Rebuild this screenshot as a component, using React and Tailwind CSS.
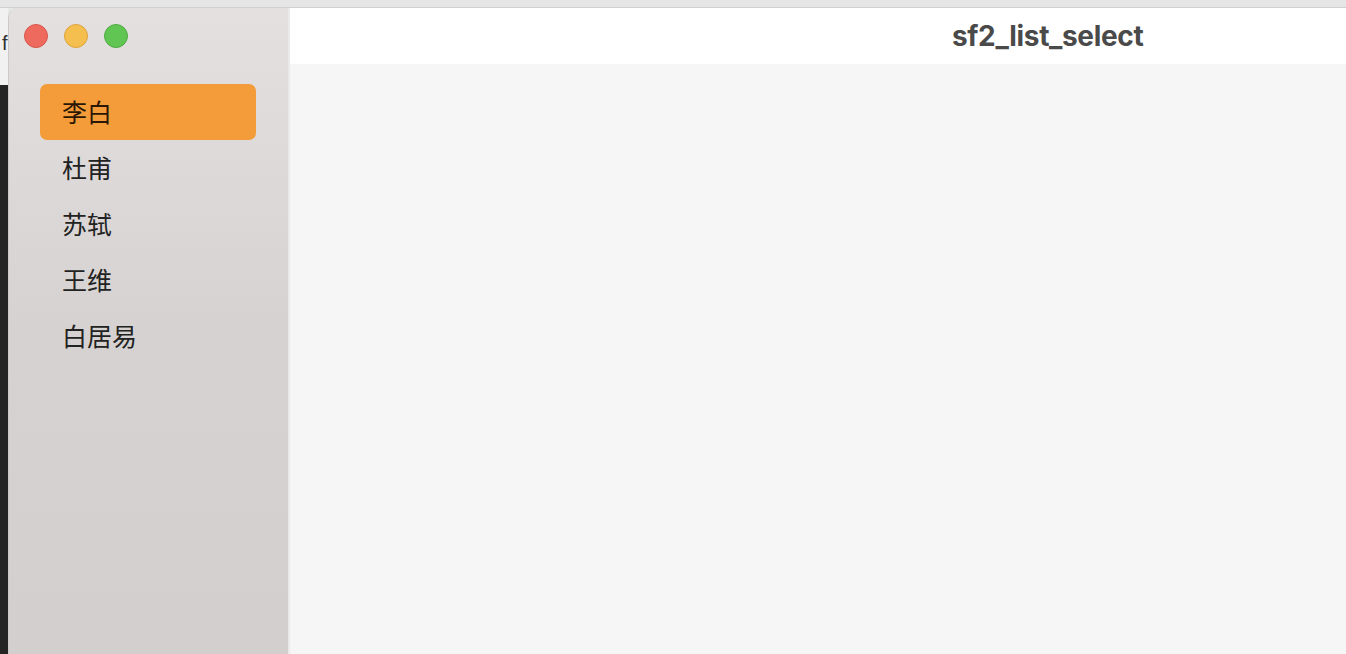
import React from "react";

const poets = ["李白", "杜甫", "苏轼", "王维", "白居易"];

export default function App() {
  const selected = 0;

  return (
    <div className="w-[1346px] h-[654px] overflow-hidden flex flex-col bg-[#e7e7e7] font-['Liberation_Sans','Noto_Sans_CJK_SC',sans-serif]">
      {/* strip behind the window */}
      <div className="h-[8px] shrink-0 bg-[#e6e6e6] border-b border-[#cfcfcf]" />

      <div className="flex flex-1 min-h-0">
        {/* edge of the window behind */}
        <div className="w-[8px] shrink-0 flex flex-col">
          <div className="h-[77px] bg-[#f1f1f1] overflow-hidden">
            <span className="block mt-[25px] ml-[2px] text-[20px] leading-none text-[#333]">f</span>
          </div>
          <div className="flex-1 bg-[#242424]" />
        </div>

        {/* window */}
        <div className="flex flex-1 min-w-0 rounded-tl-[10px] overflow-hidden border-l border-[#c9c9c9]">
          {/* sidebar */}
          <div className="w-[281px] shrink-0 flex flex-col bg-gradient-to-b from-[#e4e0df] via-[#d6d2d1] to-[#d3cfce] border-r-2 border-[#ebe9e9]">
            <div className="h-[56px] flex items-center gap-[16px] pl-[15px]">
              <span className="w-[24px] h-[24px] rounded-full bg-[#ee6a5e] border border-[#d9564b]" />
              <span className="w-[24px] h-[24px] rounded-full bg-[#f5bf4f] border border-[#dea23a]" />
              <span className="w-[24px] h-[24px] rounded-full bg-[#61c554] border border-[#50aa43]" />
            </div>
            <div className="flex flex-col pl-[31px] pr-[32px] pt-[20px]">
              {poets.map((name, i) => (
                <div
                  key={name}
                  className={`h-[56px] flex items-center pl-[22px] rounded-[7px] text-[25px] font-['Noto_Sans_CJK_SC',sans-serif] ${
                    i === selected
                      ? "bg-[#f39c39] text-[#2b1705]"
                      : "text-[#222]"
                  }`}
                >
                  {name}
                </div>
              ))}
            </div>
          </div>

          {/* content */}
          <div className="flex-1 flex flex-col bg-[#f6f6f6]">
            <div className="h-[56px] shrink-0 bg-white flex items-center pl-[662px]">
              <span className="text-[28px] font-bold text-[#4a4a4a] leading-none font-['Inter',sans-serif] tracking-[-0.35px]">sf2_list_select</span>
            </div>
            <div className="flex-1" />
          </div>
        </div>
      </div>
    </div>
  );
}
